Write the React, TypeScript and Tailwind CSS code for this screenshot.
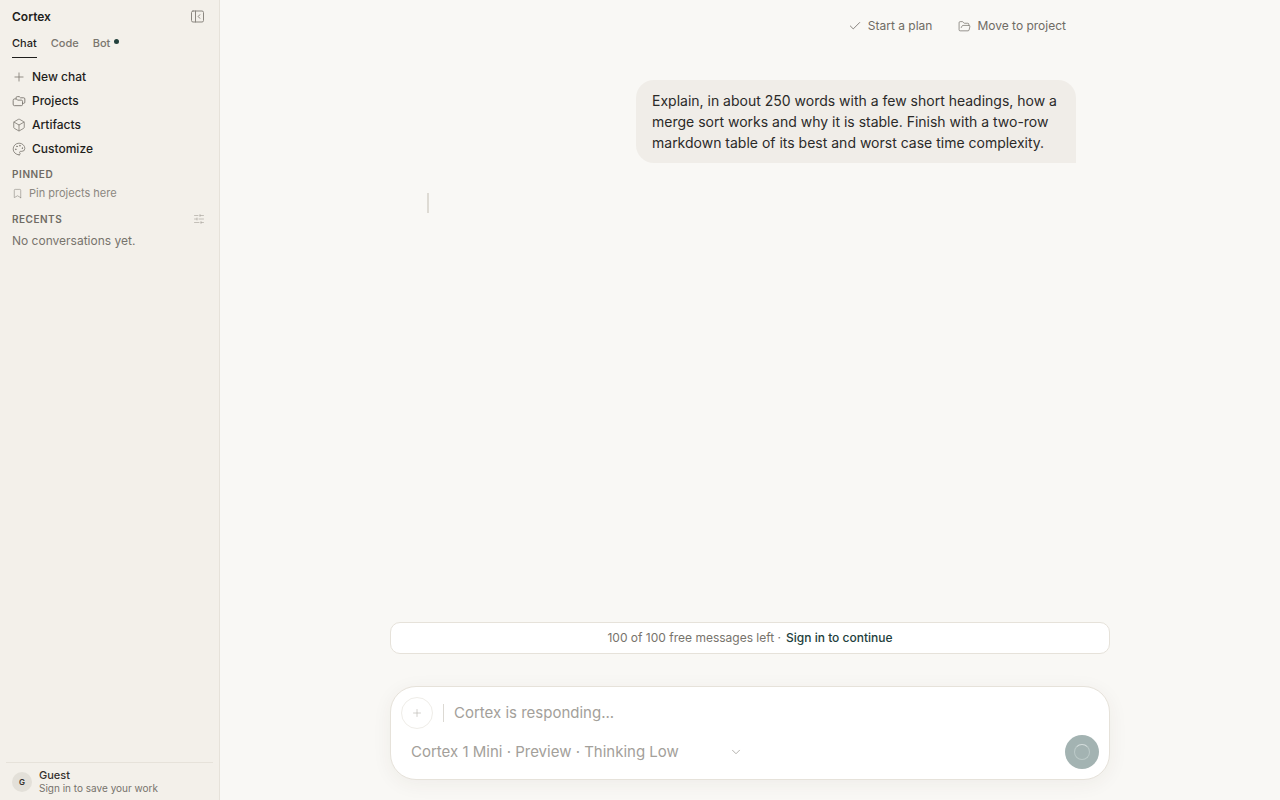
import { Check, ChevronDown, FolderOpen, Plus, Box, Palette, Bookmark, SlidersHorizontal } from "lucide-react";

const Projects = () => (
  <svg width="14" height="14" viewBox="0 0 24 24" fill="none" stroke="currentColor" strokeWidth="1.6" strokeLinecap="round" strokeLinejoin="round">
    <path d="M7 8V6.5a2 2 0 0 1 2-2h3.5l2 2H20a2 2 0 0 1 2 2V14a2 2 0 0 1-2 2h-2" />
    <path d="M2 10.5a2 2 0 0 1 2-2h3.5l2 2H16a2 2 0 0 1 2 2V18a2 2 0 0 1-2 2H4a2 2 0 0 1-2-2z" />
  </svg>
);

const Collapse = () => (
  <svg width="13" height="13" viewBox="0 0 13 13" fill="none" stroke="currentColor" strokeWidth="1" strokeLinecap="round" strokeLinejoin="round">
    <rect x="0.5" y="1" width="12" height="11" rx="1.5" />
    <path d="M4.5 1v11" />
    <path d="M8.8 4.7 7.2 6.5l1.6 1.8" />
  </svg>
);

const navItems = [
  { label: "New chat", icon: <Plus size={14} strokeWidth={1.4} /> },
  { label: "Projects", icon: <Projects /> },
  { label: "Artifacts", icon: <Box size={14} strokeWidth={1.4} /> },
  { label: "Customize", icon: <Palette size={14} strokeWidth={1.4} /> },
];

const Sidebar = () => (
  <aside className="w-[220px] h-full shrink-0 flex flex-col bg-[#f3f0ea] border-r border-[#e6e2da] text-[#1f1e1c]">
    <div className="flex items-center justify-between h-[33px] pl-3 pr-[15px]">
      <span className="text-xs font-semibold">Cortex</span>
      <span className="text-[#8b8780] flex">
        <Collapse />
      </span>
    </div>
    <div className="flex gap-3.5 px-3 h-[25px] text-[11px] leading-[15px] font-medium text-[#7a766f]">
      <span className="h-full pt-[3px] border-b border-[#1f1e1c] text-[#1f1e1c]">Chat</span>
      <span className="pt-[3px]">Code</span>
      <span className="pt-[3px] flex items-start gap-[4px]">
        Bot
        <span className="w-[5px] h-[5px] mt-[3px] rounded-full bg-[#22403c]" />
      </span>
    </div>
    <div className="flex flex-col mt-[7px]">
      {navItems.map((item) => (
        <div key={item.label} className="flex items-center h-6 pl-3 gap-[6px] text-xs font-medium">
          <span className="w-[14px] flex justify-center text-[#7d7972]">{item.icon}</span>
          {item.label}
        </div>
      ))}
    </div>
    <div className="mt-[6px] px-3 text-[10px] leading-[14px] font-semibold tracking-[0.06em] text-[#6f6b64]">PINNED</div>
    <div className="flex items-center gap-[6px] pl-3 mt-[5px] h-[14px] text-[11px] text-[#8b8780]">
      <Bookmark size={11} strokeWidth={1.3} />
      Pin projects here
    </div>
    <div className="flex items-center justify-between mt-[12px] pl-3 pr-[14px] h-[14px] text-[#6f6b64]">
      <span className="text-[10px] font-semibold tracking-[0.05em]">RECENTS</span>
      <SlidersHorizontal size={12} strokeWidth={1.1} className="text-[#9a968f]" />
    </div>
    <div className="mt-[7px] px-3 text-xs leading-4 text-[#77736c]">No conversations yet.</div>
    <div className="mt-auto mx-[6px] mb-[5px] pt-[5px] pl-[6px] border-t border-[#e6e2da] flex items-center gap-[7px] h-[33px]">
      <span className="w-[20px] h-[20px] rounded-full bg-[#e3e0d9] flex items-center justify-center text-[8px] font-semibold text-[#33312e]">G</span>
      <div className="flex flex-col">
        <span className="text-[11px] leading-[13px] font-medium text-[#33312e]">Guest</span>
        <span className="text-[10px] leading-[13px] text-[#77736c]">Sign in to save your work</span>
      </div>
    </div>
  </aside>
);

export default function App() {
  return (
    <div className="w-full h-screen flex overflow-hidden bg-[#f9f8f5]" style={{ fontFamily: "Inter, sans-serif" }}>
      <Sidebar />
      <main className="flex-1 min-w-0 flex flex-col">
        <header className="h-[52px] shrink-0 flex items-center justify-end gap-[26px] pr-[214px] text-xs text-[#6f6b64]">
          <span className="flex items-center gap-[6px]">
            <Check size={14} strokeWidth={1.4} />
            Start a plan
          </span>
          <span className="flex items-center gap-[6px]">
            <FolderOpen size={13} strokeWidth={1.3} />
            Move to project
          </span>
        </header>

        <div className="flex-1 min-h-0 w-[652px] mx-auto pt-[28px]">
          <div className="flex justify-end">
            <div className="w-[440px] px-4 py-[10px] rounded-[18px] rounded-br-none bg-[#f0ede8] text-[14px] leading-[21px] text-[#2b2a28]">
              Explain, in about 250 words with a few short headings, how a merge sort works and why it is stable. Finish with a two-row markdown table of its best and worst case time complexity.
            </div>
          </div>
          <div className="w-[1.5px] h-5 mt-[30px] ml-[3px] bg-[#dedbd4]" />
        </div>

        <div className="w-[720px] mx-auto shrink-0">
          <div className="h-8 rounded-[10px] border border-[#e6e2da] bg-white flex items-center justify-center gap-[5px] text-xs text-[#77736c]">
            <span>100 of 100 free messages left ·</span>
            <span className="font-medium text-[#22403c]">Sign in to continue</span>
          </div>
          <div className="mt-[32px] mb-5 h-[94px] rounded-[26px] border border-[#e6e2da] bg-white shadow-[0_4px_20px_rgba(60,50,30,0.06)] px-[10px] pt-[10px] flex flex-col">
            <div className="flex items-center">
              <span className="w-8 h-8 rounded-full border border-[#efede8] flex items-center justify-center text-[#bbb8b2]">
                <Plus size={12} strokeWidth={1.3} />
              </span>
              <span className="w-px h-[18px] ml-[10px] bg-[#dcd9d3]" />
              <span className="ml-[10px] text-[15px] text-[#a3a09a]">Cortex is responding...</span>
            </div>
            <div className="flex items-center mt-[6px]">
              <span className="ml-[10px] w-[318px] text-[15px] leading-[22px] text-[#a3a09a]">Cortex 1 Mini · Preview · Thinking Low</span>
              <ChevronDown size={14} strokeWidth={1.4} className="text-[#a3a09a]" />
              <span className="ml-auto w-[34px] h-[34px] rounded-full bg-[#a3b3b2] flex items-center justify-center">
                <span className="w-4 h-4 rounded-full border-[1.5px] border-[#bccac8] border-t-[#d5dedd]" />
              </span>
            </div>
          </div>
        </div>
      </main>
    </div>
  );
}
